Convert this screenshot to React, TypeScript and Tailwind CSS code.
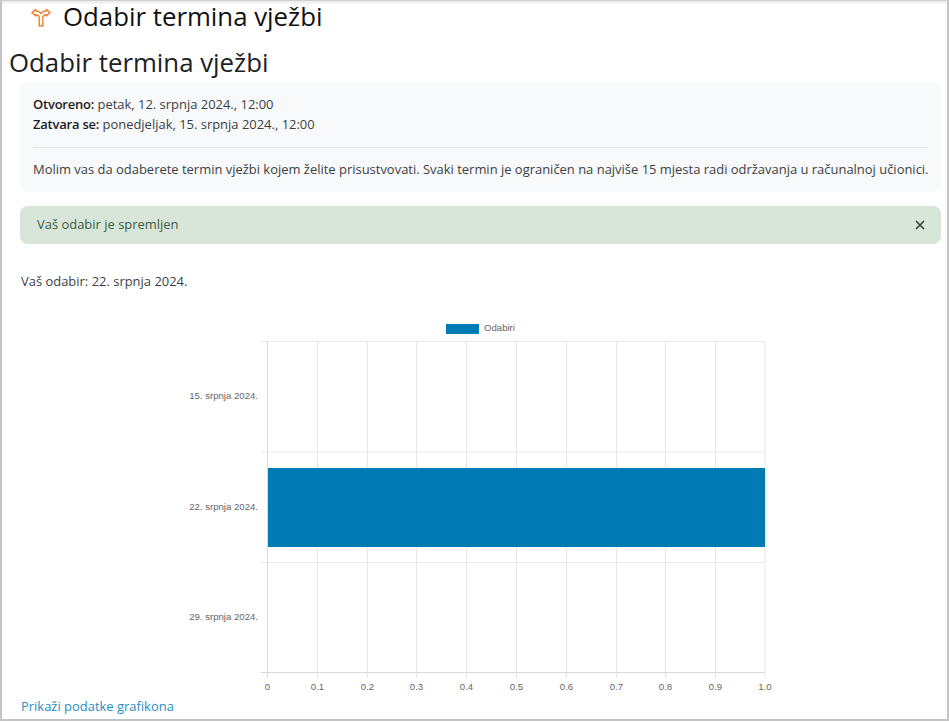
const font = { fontFamily: '"Open Sans", sans-serif' };

const xTicks = ["0", "0.1", "0.2", "0.3", "0.4", "0.5", "0.6", "0.7", "0.8", "0.9", "1.0"];
const xPos = [267.5, 317.5, 367.5, 416.5, 466.5, 516.5, 566.5, 616.5, 665.5, 715.5, 765];
const rows = [
  { label: "15. srpnja 2024.", y: 396 },
  { label: "22. srpnja 2024.", y: 507 },
  { label: "29. srpnja 2024.", y: 617 },
];

function Chart() {
  return (
    <svg width="945" height="400" viewBox="2 316 945 400" className="block">
      <g fontFamily="'Liberation Sans', sans-serif" fontSize="9.6" fill="#666">
        <rect x="446" y="324" width="33" height="10" fill="#007bb3" />
        <text x="484" y="331">Odabiri</text>
        {xPos.map((x, i) => (
          <line key={x} x1={x} x2={x} y1="341" y2="678" stroke={i === 0 ? "#d9d9d9" : "#e6e6e6"} />
        ))}
        {[341.5, 452, 562.5, 672.5].map((y) => (
          <line key={y} x1="261" x2="765" y1={y} y2={y} stroke={y === 672.5 ? "#d9d9d9" : "#e9e9e9"} />
        ))}
        <rect x="268" y="468" width="497" height="79" fill="#007bb3" />
        {rows.map((row) => (
          <text key={row.label} x="258" y={row.y + 3} textAnchor="end">
            {row.label}
          </text>
        ))}
        {xTicks.map((tick, i) => (
          <text key={tick} x={xPos[i]} y="690" textAnchor="middle">
            {tick}
          </text>
        ))}
      </g>
    </svg>
  );
}

function ForkIcon() {
  return (
    <svg width="20" height="20" viewBox="0 0 20 20" fill="none" stroke="#f0853a" strokeWidth="1.5" strokeLinejoin="round">
      <path d="M8.2 19 V10.5 C8 8.5 6.5 7.6 4.8 7.4 V9 L1 5.6 L4.8 2.4 V4 C7 4 9 5 10 6.6 C11 5 13 4 15.2 4 V2.4 L19 5.6 L15.2 9 V7.4 C13.5 7.6 12 8.5 11.8 10.5 V19 Z" />
    </svg>
  );
}

export default function App() {
  return (
    <div className="h-[722px] w-[949px] overflow-hidden bg-white" style={font}>
      <div className="h-[721px] w-[949px] overflow-hidden border-x-2 border-b-2 border-t border-x-[#c4c4c4] border-b-[#c4c4c4] border-t-[#d0d0d0]">
        <div className="flex h-[32px] items-center bg-gradient-to-b from-[#e9e9e9] to-white to-[12%] pl-[29px]">
          <ForkIcon />
          <h1 className="mb-[3px] ml-[12px] text-[25.8px] leading-[28px] font-medium text-[#111]">Odabir termina vježbi</h1>
        </div>
        <h2 className="mt-[12px] pl-[7px] text-[25.8px] leading-[34px] text-[#1d2125]">Odabir termina vježbi</h2>

        <div className="mt-[3px] ml-[18px] w-[921px] rounded-lg bg-[#f8f9fa] px-[13px] pt-[13px] text-[12.96px] leading-[19.5px] text-[#3b3f44]">
          <div>
            <span className="font-semibold tracking-[-0.2px] text-[#1d2125]">Otvoreno:</span> petak, 12. srpnja 2024., 12:00
          </div>
          <div>
            <span className="font-semibold tracking-[-0.2px] text-[#1d2125]">Zatvara se:</span> ponedjeljak, 15. srpnja 2024., 12:00
          </div>
          <hr className="mt-[13px] border-[#e6e6e6]" />
          <p className="pt-[12px] pb-[12px] whitespace-nowrap">
            Molim vas da odaberete termin vježbi kojem želite prisustvovati. Svaki termin je ograničen na najviše 15 mjesta radi održavanja u računalnoj učionici.
          </p>
        </div>

        <div className="mt-[14px] ml-[18px] flex h-[38px] w-[921px] items-center justify-between rounded-lg bg-[#d8e5d9] pt-[1px] pr-[16px] pl-[17px] text-[12.96px] text-[#3f5e45]">
          <span>Vaš odabir je spremljen</span>
          <svg width="10" height="10" viewBox="0 0 10 10" stroke="#3a3f3b" strokeWidth="1.6">
            <path d="M1 1 L9 9 M9 1 L1 9" />
          </svg>
        </div>

        <p className="mt-[27px] ml-[19px] text-[12.96px] leading-[20px] text-[#3b3f44]">Vaš odabir: 22. srpnja 2024.</p>

        <div className="mt-[25px]">
          <Chart />
        </div>

        <a href="#" className="mt-[-20px] ml-[19px] block text-[12.96px] leading-[20px] text-[#1f8fbf]">
          Prikaži podatke grafikona
        </a>
      </div>
    </div>
  );
}
